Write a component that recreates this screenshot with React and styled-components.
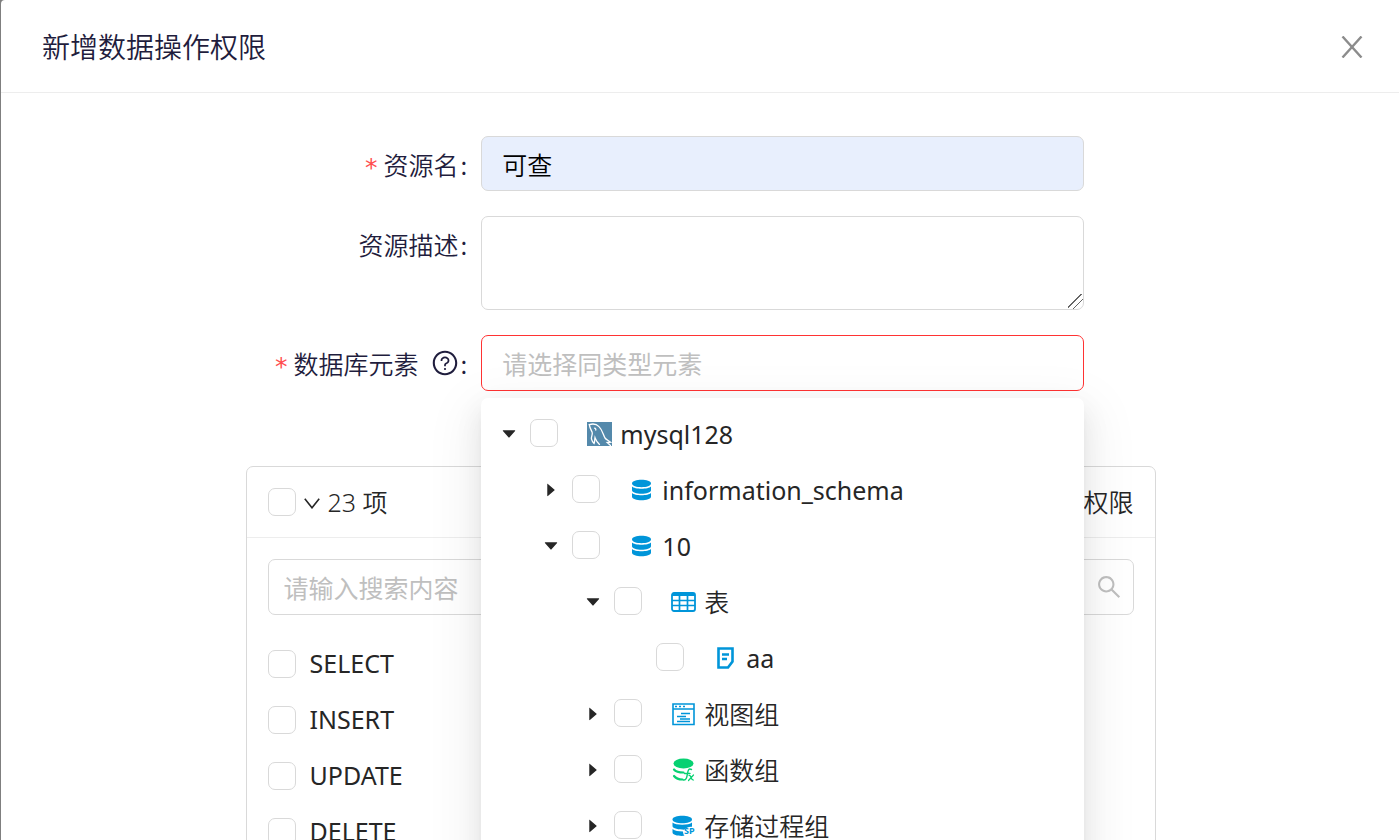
import React, { useState } from 'react';
import styled, { createGlobalStyle } from 'styled-components';
import {
  AiFillCaretDown,
  AiFillCaretRight,
  AiOutlineQuestionCircle,
  AiOutlineSearch
} from 'react-icons/ai';

const GlobalStyle = createGlobalStyle`
  * {
    box-sizing: border-box;
  }
  body {
    margin: 0;
    background: #7f7f7f;
    font-family: 'Noto Sans', 'Noto Sans CJK SC', sans-serif;
    font-size: 25px;
    color: #262626;
  }
  input, textarea, button {
    font: inherit;
    color: inherit;
  }
`;

const Page = styled.div`
  height: 100vh;
  padding-left: 1px;
  overflow: hidden;
`;

const Modal = styled.section`
  min-height: 100vh;
  background: #fff;
  border-top-left-radius: 4px;
`;

const ModalHeader = styled.header`
  display: flex;
  align-items: center;
  justify-content: space-between;
  height: 93px;
  padding: 0 36px 0 41px;
  border-bottom: 1px solid #ededed;
`;

const Title = styled.h1`
  margin: 0;
  font-family: 'Noto Sans CJK SC', sans-serif;
  font-size: 28px;
  font-weight: 350;
  line-height: 38px;
  color: #1f1d3d;
`;

const CloseButton = styled.button`
  display: flex;
  padding: 2px 0 0;
  border: 0;
  background: none;
  color: #8c8c8c;
  cursor: pointer;
`;

const ModalBody = styled.div`
  padding: 43px 41px 43px 42px;
`;

const Form = styled.form`
  display: flex;
  flex-direction: column;
  gap: 25px;
`;

const FormRow = styled.div`
  display: grid;
  grid-template-columns: 8fr 11fr 5fr;
  align-items: start;
`;

const Label = styled.label`
  display: flex;
  align-items: center;
  justify-content: flex-end;
  height: 55px;
  padding-right: 14px;
  font-family: 'Noto Sans CJK SC', sans-serif;
  font-weight: 350;
  color: #1f1d3d;

  svg {
    margin-left: 12px;
    font-size: 28px;
  }
`;

const Required = styled.span`
  padding-top: 8px;
  margin-right: 6px;
  font-family: 'DejaVu Sans', sans-serif;
  font-weight: 400;
  line-height: 24px;
  color: #ff4d4f;
`;

const Colon = styled.span`
  margin-left: 2px;
`;

const Field = styled.div`
  position: relative;
`;

const TextInput = styled.input`
  display: block;
  width: 100%;
  height: ${props => (props.$invalid ? 56 : 55)}px;
  padding: 0 20px;
  border: 1px solid ${props => (props.$invalid ? '#ff3333' : '#d9d9d9')};
  border-radius: 7px;
  outline: 0;
  background: ${props => (props.$filled ? '#e8effd' : '#fff')};
  color: #000;
  font-family: 'Noto Sans CJK SC', sans-serif;
  font-weight: 350;

  &::placeholder {
    color: #bfbfbf;
    font-weight: 400;
  }
`;

const TextArea = styled.textarea`
  display: block;
  width: 100%;
  height: 94px;
  padding: 7px 20px;
  border: 1px solid #d9d9d9;
  border-radius: 7px;
  outline: 0;
  resize: vertical;

  &::-webkit-resizer {
    background: linear-gradient(
      135deg,
      transparent 43%,
      #666 43% 47%,
      transparent 47% 66%,
      #666 66% 70%,
      transparent 70%
    );
  }
`;

const Dropdown = styled.div`
  position: absolute;
  top: calc(100% + 7px);
  left: 0;
  right: 0;
  z-index: 10;
  padding: 14px 7px;
  border-radius: 7px;
  background: #fff;
  box-shadow: 0 5px 11px -7px rgba(0, 0, 0, 0.12),
    0 11px 28px rgba(0, 0, 0, 0.08), 0 16px 49px 14px rgba(0, 0, 0, 0.05);
`;

const Tree = styled.ul`
  margin: 0;
  padding: 0;
  list-style: none;
`;

const TreeRow = styled.li`
  display: flex;
  align-items: center;
  height: 42px;
  margin-bottom: 14px;
  padding-left: ${props => props.$level * 42}px;
`;

const Switcher = styled.button`
  display: flex;
  align-items: center;
  justify-content: center;
  width: 42px;
  height: 42px;
  padding: 2px 0 0;
  border: 0;
  background: none;
  font-size: 18px;
`;

const SwitcherSpace = styled.span`
  width: 42px;
`;

const Checkbox = styled.input`
  appearance: none;
  flex: none;
  width: 28px;
  height: 28px;
  margin: 0;
  border: 1px solid #d9d9d9;
  border-radius: 7px;
  background: #fff;

  &:checked {
    background: #0095d9;
    border-color: #0095d9;
  }
`;

const NodeLabel = styled.label`
  display: flex;
  align-items: center;
  gap: 8px;
  padding-top: 2px;
  margin-left: 29px;
  font-weight: ${props => (props.$cjk ? 350 : 400)};
  line-height: 40px;
  white-space: nowrap;

  svg {
    flex: none;
  }
`;

const Transfer = styled.section`
  width: 100%;
  max-width: 910px;
  margin: 75px auto 0;
  border: 1px solid #d9d9d9;
  border-radius: 7px;
`;

const TransferHeader = styled.div`
  display: flex;
  align-items: center;
  height: 71px;
  padding: 0 21px;
  border-bottom: 1px solid #ededed;
  font-weight: 350;
  line-height: 36px;

  svg {
    margin: 2px 8px 0;
  }
`;

const TransferTitle = styled.span`
  margin-left: auto;
`;

const SearchBox = styled.label`
  display: flex;
  align-items: center;
  height: 56px;
  margin: 21px 21px 0;
  padding: 0 10px 0 15px;
  border: 1px solid #d9d9d9;
  border-radius: 7px;
  color: #bfbfbf;

  svg {
    font-size: 28px;
  }
`;

const SearchInput = styled.input`
  flex: 1;
  min-width: 0;
  padding: 0;
  border: 0;
  outline: 0;
  background: none;
  font-family: 'Noto Sans CJK SC', sans-serif;

  &::placeholder {
    color: #bfbfbf;
  }
`;

const ItemList = styled.ul`
  margin: 0;
  padding: 21px;
  list-style: none;
`;

const Item = styled.li`
  display: flex;
  align-items: center;
  height: 56px;

  label {
    padding: 0 0 2px 14px;
  }
`;

const CloseIcon = () => (
  <svg width="22" height="22" viewBox="0 0 22 22" stroke="currentColor" strokeWidth="2.4">
    <path d="M1.500 0.500l19 21M20.500 0.500l-19 21" />
  </svg>
);

const ChevronIcon = () => (
  <svg width="16" height="11" viewBox="0 0 16 11" fill="none" stroke="currentColor" strokeWidth="1.600">
    <path d="M0.800 0.800l7.200 9 7.200-9" />
  </svg>
);

const MysqlIcon = () => (
  <svg width="25" height="24" viewBox="0 0 25 24" fill="none">
    <path d="M0 0h25v24H0z" fill="#5489ab" />
    <g stroke="#fff" strokeWidth="1.300" strokeLinecap="round">
      <path d="M2.300 2.600C5.500 1.600 9.500 2 12 4.600c3.200 3 4 7.400 6 11.400 1 1.400 3.600 2.600 5.600 4.200l-3.400.3 3.300 3" />
      <path d="M2.300 2.600c.5 3.400 1.600 5 2.800 7.400 1 3-1.300 4.400-.6 7.200.4 1.800 1.300 3 2.600 4.200.8-1.400.5-3.600.9-5.800 1 2.800 2.500 5 4.500 6.800" />
      <path d="M7.600 6.200c1 0 1.300.8 1.200 1.800" />
    </g>
  </svg>
);

const DatabaseIcon = () => (
  <svg width="25" height="24" viewBox="0 0 25 24" fill="#0095d9">
    <path d="M3 5.500C3 .6 22 .6 22 5.500S3 10.400 3 5.500z" />
    <path d="M3 8.500c2.600 3 16.400 3 19 0v3.800c0 4.600-19 4.600-19 0z" />
    <path d="M3 15c2.600 3 16.400 3 19 0v3.800c0 4.600-19 4.600-19 0z" />
  </svg>
);

const TableIcon = () => (
  <svg width="25" height="24" viewBox="0 0 25 24" fill="none">
    <rect x="1" y="3" width="23" height="18" rx="2" stroke="#0095d9" strokeWidth="1.800" />
    <path d="M1 3h23v3H1z" fill="#0095d9" />
    <path d="M1 10.500h23M1 15.500h23M8.500 4v17M16.500 4v17" stroke="#0095d9" strokeWidth="1.700" />
  </svg>
);

const SheetIcon = () => (
  <svg width="25" height="24" viewBox="0 0 25 24" fill="none">
    <path d="M5.500 2.500h14v13l-4.500 6H5.500z" stroke="#0095d9" strokeWidth="2.600" />
    <path d="M9 8.500h7M9 13h5" stroke="#0095d9" strokeWidth="2.600" />
  </svg>
);

const ViewIcon = () => (
  <svg width="25" height="24" viewBox="0 0 25 24" fill="none" stroke="#0095d9">
    <path d="M2 2h21v20.500H2zM2 7h21" strokeWidth="1.600" />
    <path d="M4 4.500h2M8 4.500h2M12 4.500h2M10 11.500h9M6 14.500h9M9 17h10M6 19.500h13" strokeWidth="1.400" />
  </svg>
);

const FunctionIcon = () => (
  <svg width="25" height="24" viewBox="0 0 25 24" fill="none">
    <ellipse cx="12.500" cy="5.500" rx="10" ry="5" fill="#07d172" />
    <g stroke="#07d172" strokeLinecap="round">
      <path d="M3 11.500c2 2.500 5.500 3 9.500 3M3 18c2 2.500 5 3.500 8.500 3.500" strokeWidth="2.200" />
      <path d="M20.500 11.500c-3-1.500-3.500 1-4 4s-1 7-4 6.500M13.500 15.500h5.500" strokeWidth="1.400" />
      <path d="M18 17.500c2.500-.8 1.500 5 4.500 4.500M22.500 17l-5 5.500" strokeWidth="1.200" />
    </g>
  </svg>
);

const ProcedureIcon = () => (
  <svg width="25" height="24" viewBox="0 0 25 24">
    <g fill="#0095d9">
      <path d="M1.500 5.500c0-5 19.500-5 19.500 0s-19.500 5-19.500 0z" />
      <path d="M1.500 8.500c3 3 16.500 3 19.500 0v4.200c-3-.4-6.500 1.300-8 3-5-.1-11.500-.8-11.500-3.600z" />
      <path d="M1.500 15c2.500 2 6 2.400 10.500 2.500 0 1.700.6 3.200 1.500 4.300-5 .5-12-.4-12-3.500z" />
    </g>
    <text x="13" y="20" fill="#0095d9" fontFamily="Noto Sans" fontSize="9" fontWeight="700">
      SP
    </text>
  </svg>
);

const nodes = [
  { id: 'mysql128', title: 'mysql128', level: 0, open: true, icon: MysqlIcon },
  { id: 'schema', title: 'information_schema', level: 1, open: false, icon: DatabaseIcon },
  { id: 'db10', title: '10', level: 1, open: true, icon: DatabaseIcon },
  { id: 'tables', title: '表', level: 2, open: true, icon: TableIcon, cjk: true },
  { id: 'aa', title: 'aa', level: 3, leaf: true, icon: SheetIcon },
  { id: 'views', title: '视图组', level: 2, open: false, icon: ViewIcon, cjk: true },
  { id: 'functions', title: '函数组', level: 2, open: false, icon: FunctionIcon, cjk: true },
  { id: 'procedures', title: '存储过程组', level: 2, open: false, icon: ProcedureIcon, cjk: true }
];

const permissions = ['SELECT', 'INSERT', 'UPDATE', 'DELETE'];

function TreeNode({ node }) {
  const Icon = node.icon;
  return (
    <TreeRow $level={node.level}>
      {node.leaf ? (
        <SwitcherSpace />
      ) : (
        <Switcher type="button" aria-expanded={node.open} aria-label={node.title}>
          {node.open ? <AiFillCaretDown /> : <AiFillCaretRight />}
        </Switcher>
      )}
      <Checkbox type="checkbox" id={node.id} />
      <NodeLabel htmlFor={node.id} $cjk={node.cjk}>
        <Icon />
        {node.title}
      </NodeLabel>
    </TreeRow>
  );
}

export default function App() {
  const [name, setName] = useState('可查');

  return (
    <Page>
      <GlobalStyle />
      <Modal role="dialog" aria-labelledby="modal-title">
        <ModalHeader>
          <Title id="modal-title">新增数据操作权限</Title>
          <CloseButton type="button" aria-label="关闭">
            <CloseIcon />
          </CloseButton>
        </ModalHeader>
        <ModalBody>
          <Form>
            <FormRow>
              <Label htmlFor="name">
                <Required>*</Required>资源名<Colon>:</Colon>
              </Label>
              <Field>
                <TextInput
                  id="name"
                  $filled
                  value={name}
                  onChange={e => setName(e.target.value)}
                />
              </Field>
            </FormRow>
            <FormRow>
              <Label htmlFor="description">
                资源描述<Colon>:</Colon>
              </Label>
              <Field>
                <TextArea id="description" />
              </Field>
            </FormRow>
            <FormRow>
              <Label htmlFor="element">
                <Required>*</Required>数据库元素
                <AiOutlineQuestionCircle />
                <Colon>:</Colon>
              </Label>
              <Field>
                <TextInput id="element" $invalid placeholder="请选择同类型元素" />
                <Dropdown>
                  <Tree>
                    {nodes.map(node => (
                      <TreeNode key={node.id} node={node} />
                    ))}
                  </Tree>
                </Dropdown>
              </Field>
            </FormRow>
          </Form>

          <Transfer>
            <TransferHeader>
              <Checkbox type="checkbox" aria-label="全选" />
              <ChevronIcon />
              <span>23 项</span>
              <TransferTitle>权限</TransferTitle>
            </TransferHeader>
            <SearchBox>
              <SearchInput placeholder="请输入搜索内容" aria-label="搜索" />
              <AiOutlineSearch />
            </SearchBox>
            <ItemList>
              {permissions.map(item => (
                <Item key={item}>
                  <Checkbox type="checkbox" id={item} />
                  <label htmlFor={item}>{item}</label>
                </Item>
              ))}
            </ItemList>
          </Transfer>
        </ModalBody>
      </Modal>
    </Page>
  );
}
